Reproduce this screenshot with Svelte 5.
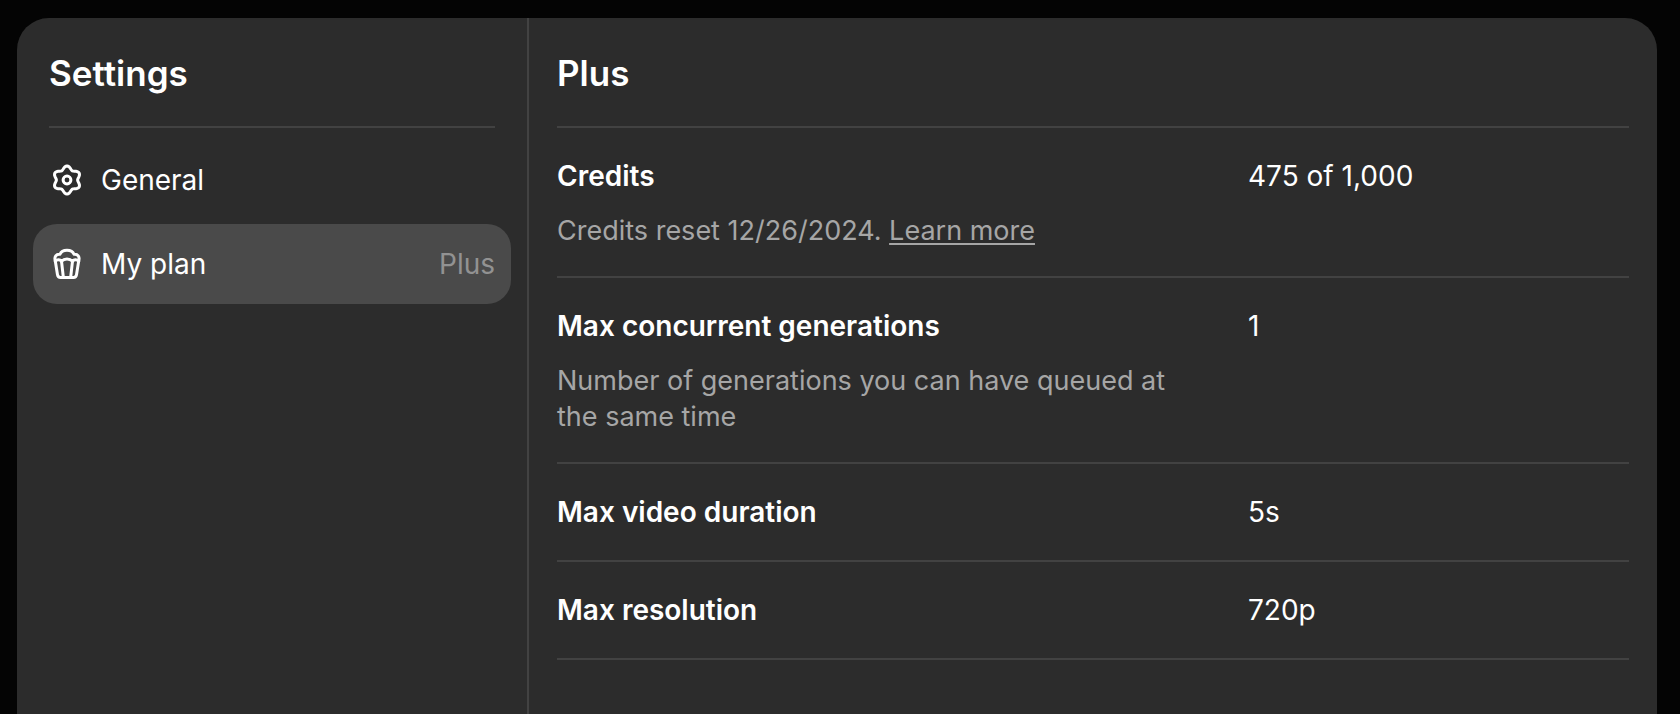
<script>
  let selected = $state('plan');

  const items = [
    { id: 'general', label: 'General', note: '' },
    { id: 'plan', label: 'My plan', note: 'Plus' },
  ];

  const limits = [
    { name: 'Credits', value: '475 of 1,000', detail: 'Credits reset 12/26/2024.', link: 'Learn more' },
    {
      name: 'Max concurrent generations',
      value: '1',
      detail: 'Number of generations you can have queued at the same time',
    },
    { name: 'Max video duration', value: '5s' },
    { name: 'Max resolution', value: '720p' },
  ];

  // Six-lobed outline of the gear, centred in a 36 unit box.
  const gear =
    'M' +
    Array.from({ length: 72 }, (_, i) => {
      const a = (i / 72) * Math.PI * 2;
      const r = 12.3 + 1.7 * Math.cos(6 * a);
      return `${(18 + r * Math.sin(a)).toFixed(2)} ${(18 - r * Math.cos(a)).toFixed(2)}`;
    }).join('L') +
    'Z';
</script>

<div class="panel">
  <aside>
    <h1>Settings</h1>
    <nav aria-label="Settings">
      {#each items as item}
        <button
          type="button"
          class:selected={selected === item.id}
          aria-current={selected === item.id ? 'page' : undefined}
          onclick={() => (selected = item.id)}
        >
          <svg viewBox="0 0 36 36" aria-hidden="true">
            {#if item.id === 'general'}
              <path d={gear} />
              <circle cx="18" cy="18" r="3.9" />
            {:else}
              <path d="M6.300 15 8.500 28.800c.3 1.700 1.300 2.700 3 2.700h13c1.700 0 2.700-1 3-2.700l2.200-13.800" />
              <path d="M6.300 15c-1.300-4.200.9-7.200 4.700-6.800 1-2.500 3.700-3.900 7-3.900s6 1.400 7 3.900c3.800-.4 6 2.600 4.700 6.800" />
              <path d="M6.300 15c1.900-1.700 4.600-1.700 6.200.2 1.700-1.800 3.500-2.300 5.500-2.300s3.800.5 5.500 2.300c1.600-1.900 4.300-1.900 6.200-.2" />
              <path d="M12.500 15.200 14.300 31M23.500 15.200 21.700 31" />
            {/if}
          </svg>
          <span>{item.label}</span>
          {#if item.note}<span class="note">{item.note}</span>{/if}
        </button>
      {/each}
    </nav>
  </aside>

  <main>
    <h2>Plus</h2>
    <dl>
      {#each limits as limit}
        <div class="row">
          <dt>
            <span class="name">{limit.name}</span>
            {#if limit.detail}
              <span class="detail">
                {limit.detail}
                {#if limit.link}<a href="#learn-more">{limit.link}</a>{/if}
              </span>
            {/if}
          </dt>
          <dd>{limit.value}</dd>
        </div>
      {/each}
    </dl>
  </main>
</div>

<style>
  :global(body) {
    margin: 0;
    background: #040404;
  }

  .panel {
    display: flex;
    box-sizing: border-box;
    min-height: calc(100vh - 18px);
    margin: 18px 23px 0 17px;
    border-radius: 32px 32px 0 0;
    background: #2c2c2c;
    color: #fff;
    font: 400 28px/36px Inter, 'Liberation Sans', sans-serif;
  }

  aside {
    box-sizing: border-box;
    flex: 0 0 512px;
    padding: 0 16px;
    border-right: 2px solid #424242;
  }

  h1,
  h2 {
    margin: 0;
    padding: 33px 0 31px;
    border-bottom: 2px solid #424242;
    font-size: 35px;
    font-weight: 600;
    line-height: 44px;
  }

  h1 {
    margin: 0 16px;
  }

  nav {
    display: flex;
    flex-direction: column;
    gap: 4px;
    padding-top: 12px;
  }

  button {
    display: flex;
    align-items: center;
    gap: 16px;
    height: 80px;
    padding: 0 16px;
    border: 0;
    border-radius: 24px;
    background: none;
    color: inherit;
    font: inherit;
    cursor: pointer;
  }

  .selected {
    background: #4a4a4a;
  }

  svg {
    width: 36px;
    height: 36px;
    fill: none;
    stroke: currentColor;
    stroke-width: 3;
    stroke-linecap: round;
    stroke-linejoin: round;
  }

  .note {
    margin-left: auto;
    color: #929292;
  }

  main {
    flex: 1;
    min-width: 0;
    padding: 0 28px;
  }

  dl {
    margin: 0;
  }

  .row {
    display: grid;
    grid-template-columns: 5fr 3fr;
    gap: 56px;
    padding: 30px 0 27px;
    border-bottom: 2px solid #424242;
  }

  dt {
    display: flex;
    flex-direction: column;
    gap: 19px;
  }

  dd {
    margin: 0;
    padding-bottom: 3px;
  }

  .name {
    font-weight: 600;
  }

  .detail {
    color: #a6a6a6;
    font-size: 27px;
  }

  a {
    color: inherit;
    text-decoration-thickness: 2px;
    text-underline-offset: 3px;
    text-decoration-skip-ink: none;
  }
</style>
